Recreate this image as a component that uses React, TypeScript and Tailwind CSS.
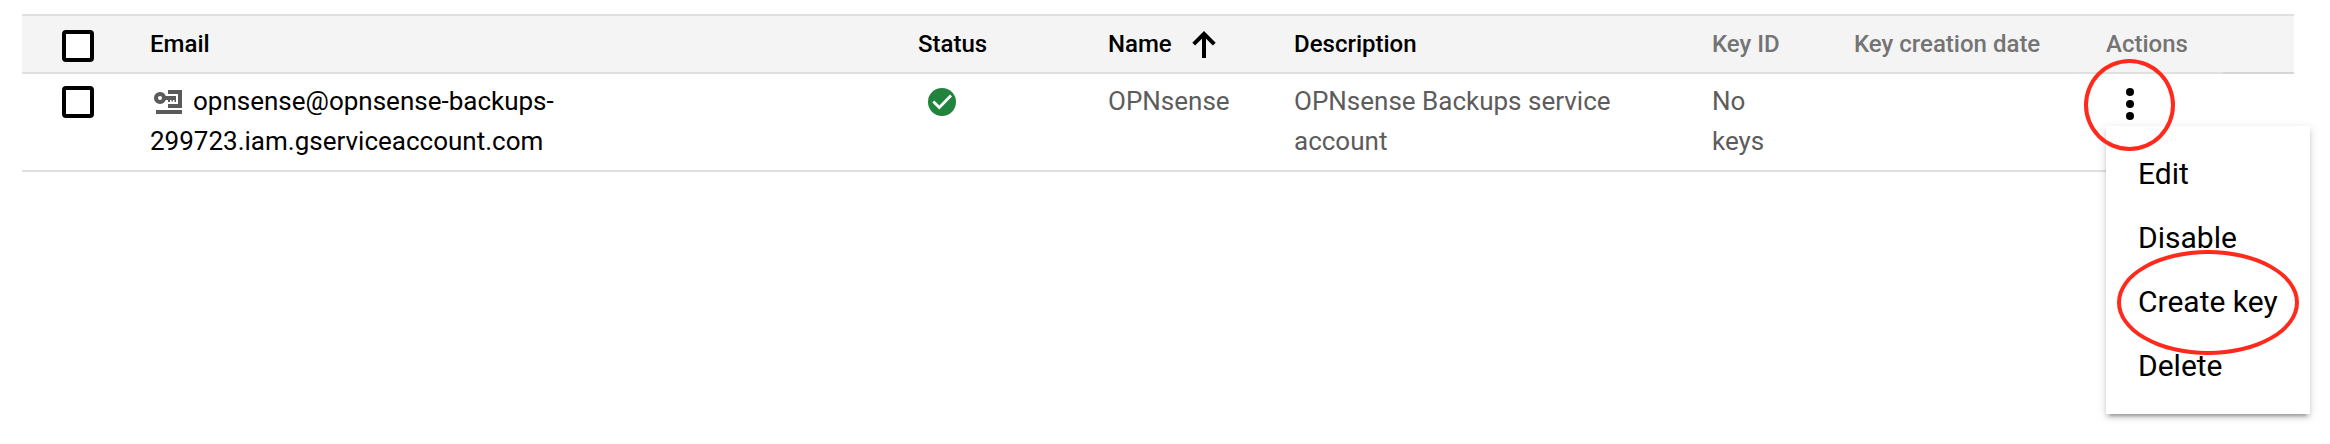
import type { ReactNode } from "react";

const columns =
  "grid grid-cols-[128px_768px_190px_186px_418px_142px_252px_188px]";

function Checkbox({ className }: { className: string }) {
  return (
    <div
      role="checkbox"
      aria-checked="false"
      className={`ml-10 size-8 rounded-[4px] border-4 border-black bg-white ${className}`}
    />
  );
}

function HeaderCell({ muted, children }: { muted?: boolean; children: ReactNode }) {
  return (
    <div
      className={`flex items-center text-[24px] leading-8 font-medium whitespace-nowrap ${
        muted ? "text-[#747474]" : "text-black"
      }`}
    >
      {children}
    </div>
  );
}

function ArrowUpIcon() {
  return (
    <svg className="ml-[20px] h-7 w-6" viewBox="0 0 24 28" fill="none">
      <path d="M12 28V4M1.700 14.100 12 3.800l10.300 10.300" stroke="#000" strokeWidth="4" />
    </svg>
  );
}

function ServiceAccountIcon() {
  return (
    <svg className="mr-[11px] ml-1 inline-block h-6 w-7 align-[-4px]" viewBox="0 0 28 24">
      <path
        fillRule="evenodd"
        fill="#5a5a5a"
        d="M6 2a6 6 0 0 1 5.660 4H22v6h-1.500v-2H19v1.500h-1.500V10H16v2h-2v-2h-2.340A6 6 0 1 1 6 2zm0 4a2 2 0 1 0 0 4 2 2 0 0 0 0-4z"
      />
      <path fill="#5a5a5a" d="M14 0h14v18H14v-4h10V4H14zM2 20h26v4H2z" />
    </svg>
  );
}

function StatusOkIcon() {
  return (
    <svg className="mt-[14px] ml-[10px] size-7" viewBox="0 0 28 28" fill="none">
      <circle cx="14" cy="14" r="14" fill="#21833c" />
      <path d="m5.300 13.500 6 6L23 7.600" stroke="#fff" strokeWidth="2.800" />
    </svg>
  );
}

function MoreIcon() {
  return (
    <svg className="mt-[14px] ml-5 h-8 w-2" viewBox="0 0 8 32">
      <circle cx="4" cy="4" r="4" />
      <circle cx="4" cy="16" r="4" />
      <circle cx="4" cy="28" r="4" />
    </svg>
  );
}

export default function App() {
  return (
    <div className="relative h-[444px] w-[2330px] overflow-hidden bg-white pt-[14px] pl-[22px] font-[Roboto,sans-serif]">
      <div className="w-[2272px]">
        <div
          className={`${columns} relative h-[60px] border-y-2 border-[#e0e0e0] bg-[#f4f4f4]`}
        >
          <Checkbox className="mt-[14px]" />
          <HeaderCell>Email</HeaderCell>
          <HeaderCell>Status</HeaderCell>
          <HeaderCell>
            Name
            <ArrowUpIcon />
          </HeaderCell>
          <HeaderCell>Description</HeaderCell>
          <HeaderCell muted>Key ID</HeaderCell>
          <HeaderCell muted>Key creation date</HeaderCell>
          <HeaderCell muted>Actions</HeaderCell>
          <div className="absolute right-0 -bottom-0.5 h-0.5 w-[72px] bg-[#d6d6d6]" />
        </div>
        <div
          className={`${columns} h-[98px] border-b-2 border-[#e0e0e0] text-[26px] leading-10 text-[#5c5c5c]`}
        >
          <Checkbox className="mt-3" />
          <div className="pt-[7px] text-black">
            <ServiceAccountIcon />
            opnsense@opnsense-backups-
            <br />
            299723.iam.gserviceaccount.com
          </div>
          <div>
            <StatusOkIcon />
          </div>
          <div className="pt-[7px]">OPNsense</div>
          <div className="w-[340px] pt-[7px]">OPNsense Backups service account</div>
          <div className="w-[60px] pt-[7px]">No keys</div>
          <div />
          <div>
            <MoreIcon />
          </div>
        </div>
      </div>

      <div className="absolute top-[126px] left-[2106px] w-[204px] bg-white py-4 shadow-[0_6px_2px_-4px_rgba(0,0,0,0.2),0_4px_4px_0_rgba(0,0,0,0.14),0_2px_10px_0_rgba(0,0,0,0.12)]">
        {["Edit", "Disable", "Create key", "Delete"].map((label) => (
          <div key={label} className="h-16 pl-8 text-[30px] leading-[64px] whitespace-nowrap text-black">
            {label}
          </div>
        ))}
      </div>

      <div className="absolute top-[59px] left-[2084px] h-[92px] w-[91px] rounded-[50%] border-4 border-[#ff2a1c]" />
      <div className="absolute top-[250px] left-[2117px] h-[105px] w-[182px] rounded-[50%] border-4 border-[#ff2a1c]" />
    </div>
  );
}
